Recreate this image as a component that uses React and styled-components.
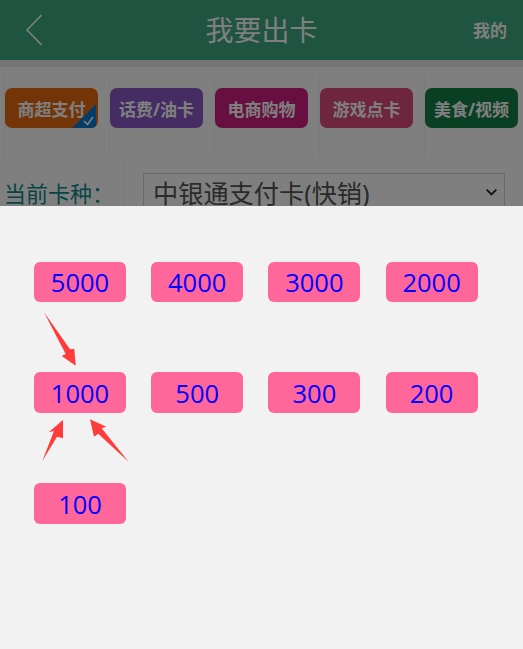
import styled, { createGlobalStyle } from "styled-components";

const GlobalStyle = createGlobalStyle`
  html, body {
    margin: 0;
    padding: 0;
    height: 100%;
    overflow: hidden;
    background: #fff;
    font-family: "Noto Sans", "Noto Sans CJK SC", sans-serif;
  }
`;

const Page = styled.div`
  width: 523px;
  height: 649px;
  overflow: hidden;
  position: relative;
  background: #fff;
`;

const Header = styled.header`
  height: 60px;
  background: #3fa880;
  display: flex;
  align-items: center;
  justify-content: space-between;
  padding: 0 16px 0 26px;
  color: #fff;
`;

const BackIcon = styled.svg`
  width: 16px;
  height: 32px;
  display: block;
`;

const Title = styled.h1`
  margin: 0;
  position: absolute;
  left: 0;
  right: 0;
  top: 9px;
  text-align: center;
  font-size: 28px;
  line-height: 42px;
  font-weight: 400;
`;

const MineLink = styled.span`
  font-size: 17px;
  font-weight: 700;
  margin-top: -2px;
`;

const TabBar = styled.div`
  padding: 7px 4px 0;
  display: grid;
  grid-template-columns: repeat(5, 105px);
  border-top: 7px solid #ebebeb;
`;

const TabCell = styled.div`
  height: 84px;
  padding-top: 14px;
  border-left: 1px solid #f4f4f4;
  box-sizing: border-box;
`;

const TabButton = styled.div`
  width: 93px;
  height: 40px;
  border-radius: 7px;
  background: ${(p) => p.$color};
  color: #fff;
  font-size: 17px;
  font-weight: 700;
  line-height: 43px;
  text-align: center;
  white-space: nowrap;
  position: relative;
  overflow: hidden;
`;

const CheckCorner = styled.svg`
  position: absolute;
  right: 2px;
  bottom: 0;
  width: 24px;
  height: 24px;
`;

const CardRow = styled.div`
  display: flex;
  align-items: flex-start;
  padding: 0 18px 0 4px;
`;

const CardLabel = styled.label`
  width: 119px;
  height: 48px;
  padding-top: 15px;
  border-right: 1px solid #f4f4f4;
  font-size: 22px;
  line-height: 40px;
  white-space: nowrap;
  color: #0f8a8a;
`;

const CardSelect = styled.div`
  flex: 1;
  height: 46px;
  margin: 15px 0 0 19px;
  border: 1px solid #d0d0d0;
  box-sizing: border-box;
  padding: 0 7px 0 9px;
  display: flex;
  align-items: flex-start;
  justify-content: space-between;
  font-size: 25.2px;
  line-height: 38px;
  white-space: nowrap;
  color: #555;
`;

const Chevron = styled.svg`
  width: 11px;
  height: 7px;
  margin-top: 15px;
`;

const Overlay = styled.div`
  position: absolute;
  inset: 0;
  background: rgba(0, 0, 0, 0.5);
`;

const Sheet = styled.section`
  position: absolute;
  left: 0;
  right: 0;
  top: 206px;
  bottom: 0;
  background: #f2f2f2;
  padding: 56px 45px 0 34px;
  box-sizing: border-box;
`;

const AmountGrid = styled.div`
  display: grid;
  grid-template-columns: repeat(4, 92px);
  column-gap: 25.2px;
  row-gap: 70px;
`;

const AmountButton = styled.button`
  height: ${(p) => (p.$tall ? 41 : 40)}px;
  border: none;
  padding: 0;
  border-radius: 6px;
  background: #ff6699;
  color: #0000ff;
  font-family: "Open Sans", "Noto Sans", sans-serif;
  font-size: 25.5px;
  line-height: 40px;
`;

const Arrows = styled.svg`
  position: absolute;
  left: 0;
  top: 0;
  width: 523px;
  height: 443px;
  pointer-events: none;
`;

const tabs = [
  { name: "商超支付", color: "#e66a0f", checked: true },
  { name: "话费/油卡", color: "#8a5ac8" },
  { name: "电商购物", color: "#cc1f80" },
  { name: "游戏点卡", color: "#dc4a7c" },
  { name: "美食/视频", color: "#128048" },
];

const amounts = [5000, 4000, 3000, 2000, 1000, 500, 300, 200, 100];

export default function App() {
  return (
    <Page>
      <GlobalStyle />
      <Header>
        <BackIcon viewBox="0 0 16 32" fill="none" stroke="#fff" strokeWidth="1.6">
          <path d="M15.5 1 L1 16 L15.5 31" />
        </BackIcon>
        <Title>我要出卡</Title>
        <MineLink>我的</MineLink>
      </Header>
      <TabBar>
        {tabs.map((tab) => (
          <TabCell key={tab.name}>
            <TabButton $color={tab.color}>
              {tab.name}
              {tab.checked && (
                <CheckCorner viewBox="0 0 24 24">
                  <path d="M24 0 V24 H0 Z" fill="#0a7ad1" />
                  <path d="M12 17 l3.5 3.5 L21 13" fill="none" stroke="#fff" strokeWidth="1.6" />
                </CheckCorner>
              )}
            </TabButton>
          </TabCell>
        ))}
      </TabBar>
      <CardRow>
        <CardLabel>当前卡种：</CardLabel>
        <CardSelect>
          中银通支付卡(快销)
          <Chevron viewBox="0 0 11 7" fill="none" stroke="#222" strokeWidth="1.8">
            <path d="M0.7 0.7 L5.5 5.5 L10.3 0.7" />
          </Chevron>
        </CardSelect>
      </CardRow>
      <Overlay />
      <Sheet>
        <AmountGrid>
          {amounts.map((amount) => (
            <AmountButton key={amount} $tall={amount <= 1000}>
              {amount}
            </AmountButton>
          ))}
        </AmountGrid>
        <Arrows viewBox="0 206 523 443">
          <path d="M44 312.3 L70 349.3 L74.3 349 L75.7 365.7 L61.7 356 L65.7 354 Z" fill="#ff3b3b" />
          <path d="M42.3 461 L54 431 L48.7 432.3 L63 420 L63 438.3 L57 436.7 Z" fill="#ff3b3b" />
          <path d="M128.7 462 L98.3 433.7 L94 436.7 L90 419.3 L106.3 426.7 L101.7 428.3 Z" fill="#ff3b3b" />
        </Arrows>
      </Sheet>
    </Page>
  );
}
